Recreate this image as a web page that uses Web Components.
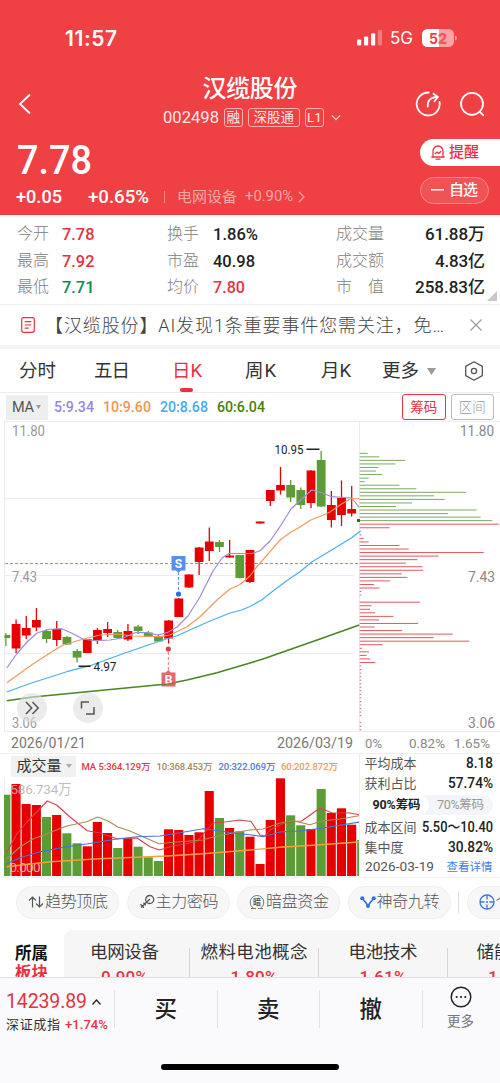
<!DOCTYPE html>
<html lang="zh-CN">
<head>
<meta charset="utf-8">
<title>汉缆股份 002498</title>
<style>
  html, body { margin: 0; background: #fff; }
  body {
    width: 500px;
    height: 1083px;
    overflow: hidden;
    font-family: Roboto, "Noto Sans CJK SC", sans-serif;
    color: #222;
  }
</style>
</head>
<body>
<stock-page></stock-page>

<script>
const RED = "#e60000";
const GREEN = "#5b9c37";

// Base class: renders a static shadow root from html()
class Base extends HTMLElement {
  constructor() {
    super();
    this._shadowRoot = this.attachShadow({ mode: "open" });
  }

  connectedCallback() {
    this._shadowRoot.innerHTML = `<style>
      * { box-sizing: border-box; }
      :host { display: block; box-sizing: border-box; }
      svg { display: block; fill: none; flex: none; }
    </style>` + this.html();
  }
}

// Text fitted to a given width: letter-spacing by default,
// horizontal scaling when the squeeze attribute is set
class FitText extends HTMLElement {
  constructor() {
    super();
    this._shadowRoot = this.attachShadow({ mode: "open" });
  }

  connectedCallback() {
    this._shadowRoot.innerHTML = `
      <style>
        :host { display: inline-block; white-space: nowrap; flex: none; }
        span { display: inline-block; transform-origin: 0 50%; }
      </style>
      <span><slot></slot></span>`;
    const w = Number(this.getAttribute("w"));
    const span = this._shadowRoot.querySelector("span");
    const natural = span.getBoundingClientRect().width;
    if (this.hasAttribute("squeeze")) {
      span.style.transform = `scaleX(${(w / natural).toFixed(4)})`;
    } else {
      const count = [...this.textContent].length;
      span.style.letterSpacing = ((w - natural) / Math.max(1, count - 1)).toFixed(3) + "px";
    }
    this.style.width = w + "px";
  }
}

class StatusBar extends Base {
  html() {
    return `
      <style>
        :host { height: 76px; font-family: Inter, sans-serif; color: #fff; }
        .row { display: flex; align-items: center; height: 76px; padding: 0 43px 0 65px; }
        .time { font-size: 21px; font-weight: 600; margin-right: auto; }
        .net { font-size: 17px; margin: 0 9px 0 8px; }
        .bat {
          display: flex; align-items: center; justify-content: center;
          width: 32px; height: 18px; border-radius: 5.5px;
          background: linear-gradient(90deg, #fff 52%, #f9a3a5 52%);
          font-size: 14px; font-weight: 700; color: #ef4044;
        }
        .bat b { color: #ef5a5e; }
      </style>
      <div class="row">
        <fit-text class="time" w="52">11:57</fit-text>
        <svg width="25" height="16" viewBox="0 0 25 16">
          <g fill="#fff"><rect x="0" y="9.5" width="4.2" height="6" rx="1"/><rect x="7" y="6.5" width="4.2" height="9" rx="1"/><rect x="14" y="3.3" width="4.2" height="12.2" rx="1"/></g>
          <rect x="20.8" y="0" width="4.2" height="15.5" rx="1" fill="#f37a7d"/>
        </svg>
        <fit-text class="net" w="23" squeeze>5G</fit-text>
        <div class="bat">5<b>2</b></div>
        <svg width="2" height="6" viewBox="0 0 2 6" style="margin-left:1px"><path d="M0 0.5Q2 1 2 3T0 5.5z" fill="#f9a3a5"/></svg>
      </div>`;
  }
}

class StockNav extends Base {
  html() {
    return `
      <style>
        :host { height: 56px; color: #fff; }
        .row { display: grid; grid-template-columns: 100px 1fr 100px; height: 56px; align-items: center; }
        .back { padding-left: 18px; }
        .mid { display: flex; flex-direction: column; align-items: center; }
        .name { font-size: 24px; font-weight: 500; line-height: 30px; height: 30px; margin-top: -3px; }
        .sub { display: flex; align-items: center; height: 28px; margin-left: 4px; font-size: 16.5px; gap: 5px; color: #ffe9e8; }
        .tag {
          display: flex; justify-content: center; align-items: center;
          height: 18.5px; line-height: 16px; padding-bottom: 1px;
          border: 1px solid #f9b0b1; border-radius: 3px; font-size: 13.5px;
        }
        .icons { display: flex; justify-content: flex-end; gap: 18px; padding-right: 15px; }
      </style>
      <div class="row">
        <div class="back"><svg width="14" height="22" viewBox="0 0 14 22" stroke="#fff" stroke-width="1.8"><path d="M12 1.5L2 11l10 9.5"/></svg></div>
        <div class="mid">
          <div class="name"><fit-text w="95">汉缆股份</fit-text></div>
          <div class="sub">
            <fit-text w="56" squeeze>002498</fit-text>
            <span class="tag" style="width:19px">融</span>
            <span class="tag" style="width:52px">深股通</span>
            <span class="tag" style="width:19.5px">L1</span>
            <svg width="10" height="7" viewBox="0 0 12 8" stroke="#ffd9d9" stroke-width="1.4" style="margin-left:2px"><path d="M1 1.5l5 5 5-5"/></svg>
          </div>
        </div>
        <div class="icons">
          <svg width="26" height="26" viewBox="0 0 26 26" stroke="#fff" stroke-width="1.8" stroke-linecap="round" stroke-linejoin="round">
            <path d="M13.7 1.5A11.5 11.5 0 1 0 24.5 11"/><path d="M12.7 15.5C12.5 9.6 14.5 6.6 22.5 6"/><path d="M18.5 2.7L22.8 6l-3.3 4.3"/>
          </svg>
          <svg width="26" height="26" viewBox="0 0 26 26" stroke="#fff" stroke-width="1.8" stroke-linecap="round">
            <circle cx="13" cy="12.8" r="11"/><path d="M20.8 20.8l3.4 3.4"/>
          </svg>
        </div>
      </div>`;
  }
}

class StockPrice extends Base {
  html() {
    return `
      <style>
        :host { height: 83px; color: #fff; }
        .row { display: flex; justify-content: space-between; height: 83px; }
        .price { font-size: 41px; font-weight: 500; line-height: 56px; height: 54px; padding-left: 17px; }
        .chg { display: flex; align-items: center; height: 22px; padding-left: 16px; font-size: 17.5px; font-weight: 500; }
        .sector { display: flex; align-items: center; gap: 8px; height: 20px; line-height: 18px; padding-bottom: 1px; color: #f9a6a7; font-size: 15px; font-weight: 400; }
        .side { display: flex; flex-direction: column; gap: 10.5px; width: 80px; padding-top: 7px; }
        .pill { display: flex; align-items: center; height: 27px; font-size: 15px; font-weight: 500; line-height: 20px; padding-bottom: 1px; }
        .tip { background: #fff; color: #e8323f; border-radius: 14px 0 0 14px; padding-left: 11px; gap: 4px; }
        .fav { width: 69px; border: 1px solid #f68c8e; background: #f05356; border-radius: 14px; padding-left: 10px; gap: 5px; }
      </style>
      <div class="row">
        <div>
          <div class="price"><fit-text w="75" squeeze>7.78</fit-text></div>
          <div class="chg">
            <fit-text w="46" squeeze>+0.05</fit-text>
            <fit-text w="61" style="margin-left:26px" squeeze>+0.65%</fit-text>
            <svg width="1" height="12" style="margin:0 12px 0 15px"><rect width="1" height="12" fill="#f58a8c"/></svg>
            <span class="sector">
              <fit-text w="60">电网设备</fit-text><fit-text w="48" style="font-size:14.5px" squeeze>+0.90%</fit-text>
              <svg width="7" height="12" viewBox="0 0 7 12" stroke="#f9a6a7" stroke-width="1.2" style="margin-left:-3px"><path d="M1 1l5 5-5 5"/></svg>
            </span>
          </div>
        </div>
        <div class="side">
          <div class="pill tip">
            <svg width="14" height="15" viewBox="0 0 14 15" stroke="#e8323f" stroke-width="1.3" stroke-linecap="round" stroke-linejoin="round">
              <path d="M2 11.5V6a5 5 0 0 1 10 0v5.5M.8 12h12.4M5 14.2h4M4.2 8.7L6 7l1.8 1.5L9.8 6.4"/>
            </svg>
            <fit-text w="30">提醒</fit-text>
          </div>
          <div class="pill fav"><svg width="13" height="2"><rect width="13" height="1.5" fill="#fff"/></svg><fit-text w="29">自选</fit-text></div>
        </div>
      </div>`;
  }
}

class QuoteGrid extends Base {
  html() {
    const rows = [
      ["今开", "7.78", "r", "换手", "1.86%", "", 45, "成交量", "61.88万", 60],
      ["最高", "7.92", "r", "市盈", "40.98", "", 42, "成交额", "4.83亿", 50],
      ["最低", "7.71", "g", "均价", "7.80", "r", 32, "市　值", "258.83亿", 70],
    ];
    return `
      <style>
        :host { height: 90px; background: #fff; border-bottom: 1px solid #eee; }
        .grid {
          position: relative;
          display: grid; grid-template-columns: 45px 105px 46px 123px 1fr auto;
          grid-auto-rows: 26.7px; align-items: center; height: 89px;
          padding: 5.5px 15px 0 17px; font-size: 17px; font-weight: 500; line-height: 24px;
        }
        .k { color: #808080; font-size: 16px; font-weight: 300; }
        .v { justify-self: end; }
        .r { color: #e8323f; } .g { color: #12894e; }
        .corner { position: absolute; right: 3px; bottom: 3px; }
      </style>
      <div class="grid">
        ${rows.map(r => `
          <span class="k">${r[0]}</span><span class="${r[2]}"><fit-text w="32.5" squeeze>${r[1]}</fit-text></span>
          <span class="k">${r[3]}</span><span class="${r[5]}"><fit-text w="${r[6]}" squeeze>${r[4]}</fit-text></span>
          <span class="k">${r[7]}</span><fit-text class="v" w="${r[9]}">${r[8]}</fit-text>`).join("")}
        <svg class="corner" width="10" height="10"><path d="M10 0v10H0z" fill="#c8c8c8"/></svg>
      </div>`;
  }
}

class NoticeBar extends Base {
  html() {
    return `
      <style>
        :host { height: 44px; border-bottom: 4px solid #f4f4f7; }
        .row { display: flex; align-items: center; height: 39px; padding: 0 18px 0 21px; font-size: 18px; color: #444; font-weight: 300; }
        .txt { margin: -1px auto 0 10px; }
      </style>
      <div class="row">
        <svg width="14" height="16" viewBox="0 0 14 16" stroke="#e8323f" stroke-width="1.2"><rect x=".7" y=".7" width="12.6" height="14.6" rx="2"/><path d="M3.7 4.7h6.6M3.7 8h6.6M3.7 11.2h4"/></svg>
        <fit-text class="txt" w="399">【汉缆股份】AI发现1条重要事件您需关注，免…</fit-text>
        <svg width="12" height="12" viewBox="0 0 12 12" stroke="#999" stroke-width="1.1"><path d="M.5.5l11 11M11.5.5l-11 11"/></svg>
      </div>`;
  }
}

class PeriodTabs extends Base {
  html() {
    return `
      <style>
        :host { height: 44px; border-bottom: 1px solid #ebebeb; }
        .row { display: flex; align-items: center; height: 43px; padding: 1px 16px 0 19px; font-size: 18.5px; line-height: 26px; color: #333; }
        .on { position: relative; color: #e8323f; }
        .on::after {
          content: ""; position: absolute; left: 8px; bottom: -8px;
          width: 13px; height: 4px; border-radius: 2px; background: #e8323f;
        }
      </style>
      <div class="row">
        <fit-text w="37">分时</fit-text>
        <fit-text w="36" style="margin-left:38px">五日</fit-text>
        <span class="on" style="margin-left:42px"><fit-text w="30">日K</fit-text></span>
        <fit-text w="31" style="margin-left:43px">周K</fit-text>
        <fit-text w="30" style="margin-left:45px">月K</fit-text>
        <fit-text w="37" style="margin-left:31px">更多</fit-text>
        <svg width="9" height="7" style="margin:0 auto 0 8px"><path d="M0 0h9L4.5 7z" fill="#999"/></svg>
        <svg width="20" height="20" viewBox="0 0 20 20" stroke="#555" stroke-width="1.3" stroke-linejoin="round"><path d="M10 .8l8.3 4.6v9.2L10 19.2l-8.3-4.6V5.4z"/><circle cx="10" cy="10" r="2.6"/></svg>
      </div>`;
  }
}

class MaLegend extends Base {
  html() {
    return `
      <style>
        :host { height: 28px; }
        .row { display: flex; align-items: center; height: 28px; padding: 0 6px 0 6px; font-size: 14px; font-weight: 500; }
        .ma { display: flex; align-items: center; gap: 2px; width: 42px; height: 25px; padding-left: 6px; background: #eee; color: #555; font-size: 14.5px; font-weight: 400; }
        .btn { display: flex; align-items: center; justify-content: center; width: 43.5px; height: 26px; line-height: 18px; padding-bottom: 1px; border: 1px solid #bbb; border-radius: 3px; color: #999; font-size: 13.5px; font-weight: 300; }
        .on { border-color: #e8323f; color: #e8323f; font-weight: 400; margin: 0 5px 0 auto; }
      </style>
      <div class="row">
        <div class="ma"><fit-text w="22">MA</fit-text><svg width="5" height="4"><path d="M0 0h5L2.5 4z" fill="#999"/></svg></div>
        <fit-text w="40" style="margin-left:6px;color:#9a85dc" squeeze>5:9.34</fit-text>
        <fit-text w="48" style="margin-left:9px;color:#f09554" squeeze>10:9.60</fit-text>
        <fit-text w="48" style="margin-left:9px;color:#47a9ee" squeeze>20:8.68</fit-text>
        <fit-text w="48" style="margin-left:9px;color:#468010" squeeze>60:6.04</fit-text>
        <div class="btn on">筹码</div><div class="btn">区间</div>
      </div>`;
  }
}

// Candle columns are 10.17px apart, shared by the price and the volume chart
const candleX = i => 5.9 + i * 10.17;

class KlineChart extends Base {
  // [bodyTop, bodyBottom, wickTop, wickBottom, up]
  candles = [
    [635, 638, 633, 646, 0], [624, 648.5, 619.5, 653, 1], [628, 635.5, 616, 639, 1], [620, 627.5, 608, 631, 1],
    [631, 639, 629, 643, 0], [629, 640, 621, 646, 1], [637, 644.5, 636, 645, 0], [651, 657.5, 649, 662.5, 0],
    [639, 653, 639, 653, 1], [630, 640, 628, 644, 1], [629, 633, 622, 637, 1], [632, 638, 630, 639, 0],
    [631, 639.5, 624, 641, 1], [626.5, 631, 625, 634, 0], [632.5, 637, 631, 637, 0], [636, 641.5, 634, 641.5, 0],
    [620.5, 638.5, 620, 643.5, 1], [598.5, 617, 598, 617, 1], [574.5, 587.5, 574, 588, 1], [547.5, 562, 547, 575, 1],
    [541.5, 551, 527.5, 561, 1], [542, 547, 540, 552, 0], [555.5, 557.5, 540, 557.5, 1], [555, 578, 555, 578.5, 0],
    [550, 582, 550, 583, 1], [521.5, 523.5, 521.5, 523.5, 1], [490, 501, 490, 506, 1], [485, 490.5, 467, 494.5, 1],
    [485, 497.5, 480, 502, 0], [490, 505, 487.5, 509, 0], [470.5, 503, 470, 508, 1], [460, 506.5, 451, 507, 0],
    [505, 520, 491, 527.5, 1], [498, 515, 480.5, 526, 1], [509, 513.5, 486, 516.5, 1],
  ];

  // chip distribution, bar lengths from the top price downwards
  chips = [
    8, 19.7, 45.3, 35.7, 18.7, 16.3, 22.7, 9, 5, 39.7, 56.7, 106.3, 74.3, 85, 52.3, 36.3, 117, 88.3, 121, 132.7,
    139.5, 30, 0, 1.7, 4, 9, 39.7, 49, 124, 79, 57.7, 46.3, 62.7, 63.3, 42, 47.7, 30.3, 14.3, 19.7, 1.5, 1.5, 0,
    60.3, 11.7, 10.3, 15.7, 33.7, 19.3, 58.3, 15, 42.3, 93, 74, 109.7, 23, 2.3, 9.3, 7, 10.7, 15.7,
    1.5, 1.5, 1.5, 1.5, 1.5, 1.5, 1.5, 1.5, 1.5, 1.5, 1.5, 1.5, 1.5, 1.5, 1.5, 0, 1.5, 1.5, 1.5,
  ];

  html() {
    const candles = this.candles.map((c, i) => {
      const x = candleX(i), col = c[4] ? RED : GREEN;
      const left = i ? x - 4.4 : 4.5;
      return `<path d="M${x} ${c[2]}V${c[3]}" stroke="${col}" stroke-width="1.3"/>
        <rect x="${left}" y="${c[0]}" width="${x + 4.4 - left}" height="${c[1] - c[0]}" fill="${col}"/>`;
    }).join("");
    const chips = this.chips.map((w, i) => w
      ? `<path d="M359.700 ${(453.3 + i * 3.545).toFixed(2)}h${w}" stroke="${i < 20 ? "#7aaa62" : "#e2585c"}"/>` : "").join("");
    return `
      <style>:host { height: 311px; }</style>
      <svg width="500" height="311" viewBox="0 421 500 311" font-size="14" fill="none">
        <path d="M4 421.500H500M4 498.500H359M4 575.500H354M4 653.500H354M4 731.500H500M4.500 421V732M359.500 421V732" stroke="#ececf0"/>
        <g fill="#999" font-weight="400">
          <text x="12" y="436" textLength="33" lengthAdjust="spacingAndGlyphs">11.80</text>
          <text x="12" y="581.500" textLength="25" lengthAdjust="spacingAndGlyphs">7.43</text>
          <text x="12" y="728" textLength="25" lengthAdjust="spacingAndGlyphs">3.06</text>
          <text x="460" y="436" textLength="34" lengthAdjust="spacingAndGlyphs" fill="#888">11.80</text>
          <text x="468" y="581.500" textLength="27" lengthAdjust="spacingAndGlyphs" fill="#888">7.43</text>
          <text x="468" y="728" textLength="27" lengthAdjust="spacingAndGlyphs" fill="#888">3.06</text>
        </g>
        <path d="M5 563.500H358" stroke="#d8863f" stroke-dasharray="3 2"/>
        ${chips}
        ${candles}
        <rect x="357" y="519" width="3" height="3" fill="#2f6b2c"/>
        <g stroke-width="1.2" stroke-linejoin="round">
          <path stroke="#a08bd8" d="M6.700 668L16.700 654L27 642L37 633L48 629.500L61.500 628.700L71.500 633L83 639L95 640.700L110 640L123 638L135 632.700L147 632.700L158 635L167 632.700L177 627L188 616L200 596.700L213 571L222 558L229 553.500L252 553.500L260 550.700L270 541L280 526.700L291 509L301.700 499L311.700 490L321.700 492.700L331.700 496.700L351.700 498L359.300 507.500"/>
          <path stroke="#f09a60" d="M6.700 682.700L33 664L50 653L63 645L80 640L100 635L117 634L133 636L160 636.700L170 635L187 626.700L200 616.700L217 600L230 589L240 584.500L250 576L255 569L270 551.700L280 540L290 532.700L300 527L310.700 520L321.700 515.700L330 512L340 505L350 499L359.300 498.500"/>
          <path stroke="#4aaeea" d="M6.700 692L30 683.500L66.700 671.700L90 665.700L125 653L160 641L177 635.700L210 621L230 613L241.700 610L250 606.500L261.700 600L271.700 592L286.700 580.700L300 571.700L311.700 562L330 551L351.700 537.700L360.700 530.700"/>
          <path stroke="#4c8420" stroke-width="1.500" d="M6.700 700.700L33 697L100 690.500L167 684L187 680L217 672.700L250 663L263 659L290 649.500L320 639L359.300 625"/>
        </g>
        <g stroke="#222" stroke-width="1.500"><path d="M306.500 449.200h13M78.500 666.200h12"/></g>
        <g fill="#222" font-size="13">
          <text x="274.500" y="454" textLength="29" lengthAdjust="spacingAndGlyphs">10.95</text>
          <text x="93.500" y="671.200" textLength="23" lengthAdjust="spacingAndGlyphs">4.97</text>
        </g>
        <path d="M178.500 572V591" stroke="#5b8fe6" stroke-dasharray="3 2"/>
        <circle cx="178.500" cy="594" r="2.600" fill="#2673df"/>
        <rect x="171.500" y="556" width="14" height="14.500" fill="#5590ee"/>
        <path d="M175.500 570h6l-3 3z" fill="#5590ee"/>
        <text x="178.500" y="567.500" text-anchor="middle" font-size="12" font-weight="700" fill="#fff">S</text>
        <path d="M168.300 652V672" stroke="#e67880" stroke-dasharray="3 2"/>
        <circle cx="168.300" cy="649" r="2.600" fill="#e23b45"/>
        <path d="M165.300 673h6l-3-3z" fill="#e9646c"/>
        <rect x="161.500" y="672.500" width="14" height="14" fill="#e9646c"/>
        <text x="168.500" y="683.800" text-anchor="middle" font-size="12" font-weight="700" fill="#fff">B</text>
        <path d="M161.500 684.800L175.500 682.800" stroke="#6d7d2b" stroke-width="1.300"/>
        <circle cx="32" cy="708" r="15" fill="#ddd" fill-opacity=".6"/>
        <circle cx="88" cy="708" r="15" fill="#ddd" fill-opacity=".6"/>
        <g stroke="#555" stroke-width="1.500">
          <path d="M26 702l5.700 6-5.700 6M32.500 702l5.700 6-5.700 6"/>
          <path d="M81.500 708.500V702h7.500M86 714h8v-7"/>
        </g>
      </svg>`;
  }
}

class DateAxis extends Base {
  html() {
    return `
      <style>
        :host { height: 22px; border-bottom: 1px solid #eee; }
        .row { display: flex; align-items: center; height: 21px; padding: 1px 11px 0 11px; font-size: 14px; color: #777; }
        .pct { font-size: 13px; color: #888; }
      </style>
      <div class="row">
        <fit-text w="75" squeeze>2026/01/21</fit-text>
        <fit-text w="76" style="margin-left:191px" squeeze>2026/03/19</fit-text>
        <fit-text class="pct" w="17" style="margin-left:12px" squeeze>0%</fit-text>
        <fit-text class="pct" w="36" style="margin-left:27px" squeeze>0.82%</fit-text>
        <fit-text class="pct" w="36" style="margin-left:9px" squeeze>1.65%</fit-text>
      </div>`;
  }
}

class VolumeChart extends Base {
  // [top, up]
  bars = [
    [794.7, 0], [784, 1], [804, 1], [805, 1], [817, 0], [815, 1], [833.3, 0], [843.3, 0], [846.3, 1], [822, 1],
    [833, 1], [848, 0], [838.3, 1], [846.7, 0], [857.3, 0], [861, 0], [829.3, 1], [830, 1], [835, 1], [832.3, 1],
    [791, 1], [818, 0], [828, 1], [831.3, 0], [836.7, 1], [864, 1], [820, 1], [778.3, 1], [815.3, 0], [825.3, 0],
    [829, 1], [789, 0], [813, 1], [808.3, 1], [824.7, 1], [840, 0],
  ];

  html() {
    const bars = this.bars.map(([top, up], i) => {
      const left = Math.max(4, candleX(i) - 4.6), right = Math.min(359.5, candleX(i) + 4.5);
      return `<rect x="${left.toFixed(1)}" y="${top}" width="${(right - left).toFixed(1)}" height="${876 - top}" fill="${up ? RED : GREEN}"/>`;
    }).join("");
    return `
      <style>
        :host { width: 359.5px; height: 123px; border-right: 1px solid #eee; }
        .head { display: flex; align-items: center; height: 24px; padding-left: 11px; font-size: 9.5px; font-weight: 500; }
        .name { display: flex; align-items: center; gap: 4px; width: 65px; height: 21px; line-height: 20px; padding-left: 5.5px; margin-right: 5.5px; background: #f1f1f1; font-size: 15px; font-weight: 400; color: #333; }
      </style>
      <div class="head">
        <div class="name"><fit-text w="45">成交量</fit-text><svg width="6" height="4"><path d="M0 0h6L3 4z" fill="#aaa"/></svg></div>
        <fit-text w="69" style="color:#d93a48">MA 5:364.129万</fit-text>
        <fit-text w="56" style="margin-left:6px;color:#a3895a">10:368.453万</fit-text>
        <fit-text w="57" style="margin-left:6px;color:#5378dd">20:322.069万</fit-text>
        <fit-text w="57" style="margin-left:5.5px;color:#f0994e">60:202.872万</fit-text>
      </div>
      <svg width="359" height="99" viewBox="0 778 359 99">
        <path d="M4.500 778V877" stroke="#eee"/>
        ${bars}
        <g font-size="13.500" fill="#b9b4b4" fill-opacity=".9">
          <text x="10.500" y="793.500" textLength="61">586.734万</text>
          <text x="9.500" y="871.500" textLength="31" fill="#ddc9c5">0.000</text>
        </g>
        <g stroke-width="1.100" stroke-linejoin="round">
          <path stroke="#dc3d49" d="M6.700 852.700L16.700 834L27 822L47.300 801L56.700 805L70 817L87.300 830.700L100 833L117 838.700L137 838L150 846.700L159.300 850L173 846L196.700 841.700L213 823L226.700 821.700L240 820L251 821.500L260 835L265 836L270 830L281.700 824L290 821.700L301.700 821L320 808L331.700 812.700L350 813L360 815"/>
          <path stroke="#ab8a52" d="M6.700 859L20 847L33 839L66.700 826L86.700 821.700L97.700 817L108 821L118 827L130 831L143 836.700L159 843.700L176.700 842L203 840L213 837L233 833L250 830L263 829L280 823L293 820.700L310 824.700L321.700 821L340 819L359.300 815.700"/>
          <path stroke="#4a72d8" d="M6.700 863.700L20 857.700L40 851.700L66.700 846.700L86.700 844L117 839L136.700 836.700L160 836L180 832.700L203 828.700L220 831L240 834L250 834.700L263 836.700L280 832L300 831L323 828L360 822"/>
          <path stroke="#f0a23c" stroke-width="1.400" d="M6.700 866.700L50 861.700L100 858.700L166.700 856L200 854L250 850L283 847L317 845L359 842"/>
        </g>
      </svg>`;
  }
}

class ChipPanel extends Base {
  html() {
    return `
      <style>
        :host { width: 140px; height: 123px; }
        .row { display: flex; align-items: center; justify-content: space-between; height: 19.5px; line-height: 18px; padding: 1px 7px 0 5px; font-size: 14.5px; font-weight: 500; color: #222; }
        .k { font-size: 13px; font-weight: 400; color: #555; }
        .seg { display: flex; height: 20px; margin: 2px 7px 3px 5px; border-radius: 10px; background: #f3f5f8; }
        .seg span { display: flex; align-items: center; justify-content: center; flex: 1; font-size: 12.5px; line-height: 18px; color: #999; }
        .seg .on { background: #fff; border-radius: 10px; font-weight: 700; color: #222; }
        .row .link { font-size: 11.5px; color: #3f7fe8; font-weight: 400; }
      </style>
      <div class="row"><fit-text class="k" w="52">平均成本</fit-text><fit-text w="27" squeeze>8.18</fit-text></div>
      <div class="row"><fit-text class="k" w="52">获利占比</fit-text><fit-text w="45" squeeze>57.74%</fit-text></div>
      <div class="seg"><span class="on"><fit-text w="48">90%筹码</fit-text></span><span><fit-text w="47">70%筹码</fit-text></span></div>
      <div class="row"><fit-text class="k" w="52">成本区间</fit-text><fit-text w="71" squeeze>5.50～10.40</fit-text></div>
      <div class="row"><fit-text class="k" w="39">集中度</fit-text><fit-text w="45" squeeze>30.82%</fit-text></div>
      <div class="row" style="padding-top:0"><fit-text class="k" style="font-size:13px" w="69" squeeze>2026-03-19</fit-text><fit-text class="link" w="46">查看详情</fit-text></div>`;
  }
}

class ToolChip extends Base {
  html() {
    return `
      <style>
        :host {
          display: flex; align-items: center; gap: 1px; flex: none;
          width: 103px; height: 33px; padding-left: 11px; padding-bottom: 1px;
          border: 1px solid #eee; border-radius: 17px; background: #f7f7f8;
          font-size: 16px; line-height: 22px; font-weight: 300; color: #555; white-space: nowrap;
        }
      </style>
      <slot name="icon"></slot><slot></slot>`;
  }
}

class ToolBar extends Base {
  html() {
    return `
      <style>
        :host { height: 53px; border-top: 1px solid #f3f3f3; }
        .row { display: flex; align-items: center; gap: 7.5px; height: 48px; padding-left: 16px; overflow: hidden; }
        .sep { width: 1px; height: 21px; background: #ddd; flex: none; }
      </style>
      <div class="row">
        <tool-chip>
          <svg slot="icon" width="16" height="16" viewBox="0 0 16 16" fill="none" stroke="#555" stroke-width="1.200"><path d="M4.500 13.500V3M1 6.500L4.500 3 8 6.500M11.500 2.500V13M8 9.500l3.500 3.500L15 9.500"/></svg>
          <fit-text w="63">趋势顶底</fit-text>
        </tool-chip>
        <tool-chip>
          <svg slot="icon" width="16" height="16" viewBox="0 0 16 16" fill="none" stroke="#555" stroke-width="1.300"><circle cx="10.700" cy="5.500" r="4"/><path d="M11 5L2 13.500M1.500 10.200l3.300 3.500M4.500 8.800l2.200 2.400"/></svg>
          <fit-text w="63">主力密码</fit-text>
        </tool-chip>
        <tool-chip>
          <svg slot="icon" width="16" height="16" viewBox="0 0 16 16" fill="none" stroke="#777"><path d="M4 13.800a6.800 6.800 0 1 1 8 0M2 14.500h5M9 14.500h5"/><text x="8" y="11" text-anchor="middle" font-size="8" font-weight="700" fill="#555" stroke="none">暗</text></svg>
          <fit-text w="63">暗盘资金</fit-text>
        </tool-chip>
        <tool-chip>
          <svg slot="icon" width="16" height="16" viewBox="0 0 16 16" fill="none" stroke="#2f6fe4" stroke-width="1.600"><path d="M2.500 4.500L8 11.500l5.500-7"/><g fill="#2f6fe4" stroke="none"><circle cx="2.200" cy="4.300" r="2"/><circle cx="8" cy="12" r="2"/><circle cx="13.800" cy="4.300" r="2"/></g></svg>
          <fit-text w="63">神奇九转</fit-text>
        </tool-chip>
        <div class="sep"></div>
        <tool-chip>
          <svg slot="icon" width="16" height="16" viewBox="0 0 16 16" fill="none" stroke="#3b76e6" stroke-width="1.300"><circle cx="8" cy="8" r="7"/><path d="M8 1v4.500M8 10.500V15M1 8h4.500M10.500 8H15"/><circle cx="8" cy="8" r="1" fill="#3b76e6" stroke="none"/></svg>
          <fit-text w="16">个</fit-text>
        </tool-chip>
      </div>`;
  }
}

class SectorStrip extends Base {
  html() {
    // [name, change, cell width, name width, change width]
    const items = [["电网设备", "0.90%", 125, 69, 47], ["燃料电池概念", "1.80%", 129, 107, 47], ["电池技术", "1.61%", 129, 69, 47], ["储能概念", "1.05%", 128, 70, 47]];
    return `
      <style>
        :host { height: 47px; overflow: hidden; }
        .row { display: flex; height: 47px; }
        .lead { flex: none; width: 64px; padding: 14px 0 0 15px; font-size: 16.5px; line-height: 20px; font-weight: 700; color: #111; }
        .red { color: #e8323f; }
        .list { display: flex; flex: none; width: 436px; overflow: hidden; padding-top: 10px; border-radius: 8px 0 0 0; background: #f6f6f7; }
        .item { display: flex; flex-direction: column; align-items: center; flex: none; font-size: 17.5px; line-height: 24px; color: #333; }
        .item:first-child { padding-right: 4px; }
        .item .red { margin-top: 1px; font-size: 17px; font-weight: 500; line-height: 24px; }
        .sep { flex: none; width: 1px; height: 32px; margin-top: 8px; background: #d5d5d5; }
      </style>
      <div class="row">
        <div class="lead">所属<br><span class="red">板块</span></div>
        <div class="list">
          ${items.map(([n, p, w, tw, pw], i) => `
            ${i ? `<div class="sep"></div>` : ""}
            <div class="item" style="width:${i ? w - 1 : w}px"><fit-text w="${tw}">${n}</fit-text><fit-text class="red" w="${pw}">${p}</fit-text></div>`).join("")}
        </div>
      </div>`;
  }
}

class TradeBar extends Base {
  html() {
    return `
      <style>
        :host { position: relative; height: 106px; background: #fafafc; border-top: 1px solid #e0e0e2; }
        .row { display: flex; height: 62px; }
        .idx { width: 114px; padding: 11px 0 0 6px; }
        .num { display: flex; align-items: center; gap: 5px; height: 25px; font-size: 19.5px; color: #e8323f; }
        .sub { display: flex; align-items: center; gap: 5px; height: 21px; line-height: 18px; font-size: 13px; color: #333; }
        .sub .red { color: #e8323f; font-weight: 500; font-size: 13px; }
        .act { display: flex; align-items: center; justify-content: center; width: 102.5px; padding: 0 0 0 1px; font-size: 22.5px; line-height: 30px; font-weight: 500; color: #222; }
        .sep { width: 1px; height: 38px; margin-top: 12px; margin-right: -1px; background: #e2e2e5; }
        .more { display: flex; flex-direction: column; align-items: center; gap: 3px; width: 78px; padding-top: 8px; font-size: 13.5px; line-height: 20px; color: #777; }
        .home { width: 178px; height: 6px; margin: 23.5px 0 0 161px; border-radius: 3px; background: #000; }
      </style>
      <div class="row">
        <div class="idx">
          <div class="num"><fit-text w="81">14239.89</fit-text><svg width="9" height="6" viewBox="0 0 9 6" stroke="#222" stroke-width="1.300"><path d="M.500 5.500l4-4.500 4 4.500"/></svg></div>
          <div class="sub"><fit-text w="54">深证成指</fit-text><fit-text class="red" w="43" squeeze>+1.74%</fit-text></div>
        </div>
        <div class="sep"></div><div class="act">买</div>
        <div class="sep"></div><div class="act">卖</div>
        <div class="sep"></div><div class="act">撤</div>
        <div class="sep"></div>
        <div class="more">
          <svg width="22" height="22" viewBox="0 0 22 22"><circle cx="11" cy="11" r="9.800" stroke="#222" stroke-width="1.500"/><g fill="#222"><circle cx="6.700" cy="11" r="1.100"/><circle cx="11" cy="11" r="1.100"/><circle cx="15.300" cy="11" r="1.100"/></g></svg>
          更多
        </div>
      </div>
      <div class="home"></div>`;
  }
}

class StockPage extends Base {
  html() {
    return `
      <style>
        :host { width: 500px; height: 1083px; overflow: hidden; }
        header { height: 215px; background: #ef4044; }
        .lower { display: flex; }
      </style>
      <header>
        <status-bar></status-bar>
        <stock-nav></stock-nav>
        <stock-price></stock-price>
      </header>
      <quote-grid></quote-grid>
      <notice-bar></notice-bar>
      <period-tabs></period-tabs>
      <ma-legend></ma-legend>
      <kline-chart></kline-chart>
      <date-axis></date-axis>
      <div class="lower"><volume-chart></volume-chart><chip-panel></chip-panel></div>
      <tool-bar></tool-bar>
      <sector-strip></sector-strip>
      <trade-bar></trade-bar>`;
  }
}

customElements.define("fit-text", FitText);
customElements.define("tool-chip", ToolChip);
customElements.define("status-bar", StatusBar);
customElements.define("stock-nav", StockNav);
customElements.define("stock-price", StockPrice);
customElements.define("quote-grid", QuoteGrid);
customElements.define("notice-bar", NoticeBar);
customElements.define("period-tabs", PeriodTabs);
customElements.define("ma-legend", MaLegend);
customElements.define("kline-chart", KlineChart);
customElements.define("date-axis", DateAxis);
customElements.define("volume-chart", VolumeChart);
customElements.define("chip-panel", ChipPanel);
customElements.define("tool-bar", ToolBar);
customElements.define("sector-strip", SectorStrip);
customElements.define("trade-bar", TradeBar);
customElements.define("stock-page", StockPage);
</script>
</body>
</html>
